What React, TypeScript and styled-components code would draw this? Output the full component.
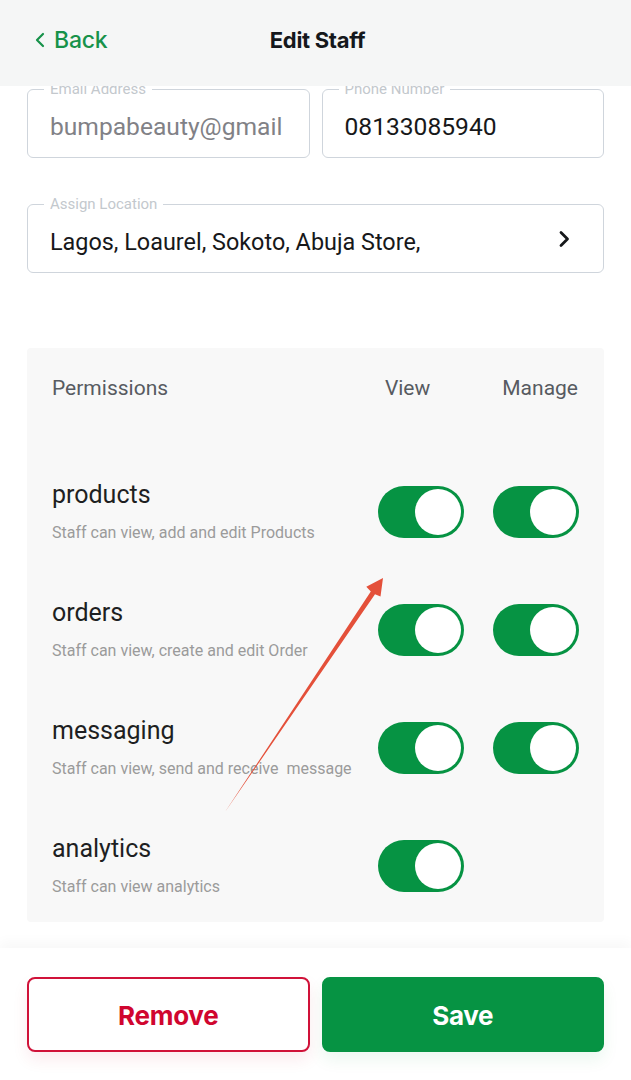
import React from "react";
import styled, { createGlobalStyle } from "styled-components";

const GlobalStyle = createGlobalStyle`
  html, body { margin: 0; padding: 0; background: #ffffff; }
  body { font-family: Roboto, "Noto Sans", Arial, sans-serif; }
  * { box-sizing: border-box; }
`;

const Page = styled.div`
  position: relative;
  width: 631px;
  height: 1080px;
  display: flex;
  flex-direction: column;
  background: #ffffff;
  overflow: hidden;
`;

const Header = styled.header`
  height: 86px;
  flex: 0 0 86px;
  background: #f5f6f6;
  display: grid;
  grid-template-columns: 1fr auto 1fr;
  align-items: center;
  padding: 0 30px 6px 34px;
  position: relative;
  z-index: 2;
`;

const BackButton = styled.div`
  display: flex;
  align-items: center;
  gap: 8px;
  color: #17924a;
  font-family: Inter, Roboto, sans-serif;
  font-size: 23px;
  font-weight: 500;
  letter-spacing: -0.2px;
`;

const Title = styled.h1`
  margin: 0;
  font-family: Inter, Roboto, sans-serif;
  font-size: 22px;
  font-weight: 700;
  color: #15181c;
  letter-spacing: -0.3px;
`;

const Scroll = styled.main`
  flex: 1;
  overflow: hidden;
  padding: 3px 27px 0;
  display: flex;
  flex-direction: column;
`;

const FieldRow = styled.div`
  display: grid;
  grid-template-columns: minmax(0, 1fr) minmax(0, 1fr);
  gap: 12px;
`;

const Field = styled.div<{ $mt?: number; $pr?: number }>`
  position: relative;
  height: 69px;
  min-width: 0;
  margin-top: ${(p) => p.$mt ?? 0}px;
  border: 1.5px solid #cfd5dc;
  border-radius: 6px;
  display: flex;
  align-items: center;
  justify-content: space-between;
  gap: 12px;
  padding: 6px ${(p) => p.$pr ?? 32}px 0 22px;
`;

const FieldLabel = styled.span`
  position: absolute;
  top: -11px;
  left: 16px;
  padding: 0 6px;
  background: #ffffff;
  font-size: 15px;
  line-height: 20px;
  color: #c3c8cd;
  white-space: nowrap;
`;

const FieldValue = styled.span<{ $muted?: boolean }>`
  font-size: 24.6px;
  color: ${(p) => (p.$muted ? "#818186" : "#17181a")};
  white-space: nowrap;
  overflow: hidden;
  min-width: 0;
`;

const LocationValue = styled(FieldValue)`
  font-size: 23.4px;
`;

const Chevron = styled.svg`
  flex: 0 0 auto;
  margin-top: -6px;
`;

const Panel = styled.section`
  margin-top: 75px;
  background: #f8f8f8;
  border-radius: 4px;
  padding: 28px 26px 25px 25px;
  display: flex;
  flex-direction: column;
`;

const PanelHead = styled.div`
  display: flex;
  align-items: center;
  font-size: 21px;
  line-height: 24px;
  color: #575b61;
  margin-bottom: 81px;
`;

const HeadCell = styled.span<{ $ml?: number }>`
  margin-left: ${(p) => p.$ml ?? 0}px;
`;

const Grow = styled.span`
  flex: 1;
`;

const PermRow = styled.div`
  display: grid;
  grid-template-columns: minmax(0, 1fr) 86px 86px;
  column-gap: 29px;
  align-items: center;
  margin-right: -1px;
  & + & {
    margin-top: 56px;
  }
`;

const PermText = styled.div`
  display: flex;
  flex-direction: column;
  gap: 14px;
`;

const PermTitle = styled.span`
  font-size: 25px;
  line-height: 28px;
  color: #1e1f22;
`;

const PermDesc = styled.span`
  font-size: 16px;
  line-height: 20px;
  color: #9b9b9b;
  white-space: nowrap;
`;

const Toggle = styled.div<{ $on: boolean }>`
  width: 86px;
  height: 52px;
  border-radius: 26px;
  background: ${(p) => (p.$on ? "#069343" : "#d6d6d6")};
  display: flex;
  align-items: center;
  justify-content: ${(p) => (p.$on ? "flex-end" : "flex-start")};
  padding: 0 3px;
`;

const Knob = styled.span`
  width: 46px;
  height: 46px;
  border-radius: 50%;
  background: #ffffff;
`;

const Footer = styled.footer`
  flex: 0 0 132px;
  background: #ffffff;
  box-shadow: 0 -6px 12px rgba(0, 0, 0, 0.03);
  padding: 29px 27px 0;
  display: grid;
  grid-template-columns: 1fr 1fr;
  gap: 12px;
  align-items: start;
  position: relative;
  z-index: 1;
`;

const ActionButton = styled.button<{ $variant: "danger" | "primary" }>`
  height: 75px;
  border-radius: 8px;
  padding-top: 3px;
  font-family: Inter, Roboto, sans-serif;
  font-size: 26px;
  font-weight: 700;
  letter-spacing: -0.3px;
  cursor: pointer;
  border: 2px solid ${(p) => (p.$variant === "danger" ? "#d01239" : "#069343")};
  background: ${(p) => (p.$variant === "danger" ? "#ffffff" : "#069343")};
  color: ${(p) => (p.$variant === "danger" ? "#d0062f" : "#ffffff")};
  box-shadow: 0 8px 16px
    ${(p) => (p.$variant === "danger" ? "rgba(208, 18, 57, 0.08)" : "rgba(6, 147, 67, 0.08)")};
`;

const Annotation = styled.svg`
  position: absolute;
  top: 0;
  left: 0;
  width: 631px;
  height: 1080px;
  pointer-events: none;
  z-index: 3;
`;

type Perm = { title: string; desc: string; view: boolean; manage: boolean | null };

const perms: Perm[] = [
  { title: "products", desc: "Staff can view, add and edit Products", view: true, manage: true },
  { title: "orders", desc: "Staff can view, create and edit Order", view: true, manage: true },
  { title: "messaging", desc: "Staff can view, send and receive\u00a0 message", view: true, manage: true },
  { title: "analytics", desc: "Staff can view analytics", view: true, manage: null },
];

export default function App() {
  return (
    <>
      <GlobalStyle />
      <Page>
        <Header>
          <BackButton>
            <svg width="12" height="16" viewBox="0 0 12 16" fill="none">
              <polyline points="9,2 3,8 9,14" stroke="#17924a" strokeWidth="2.2" strokeLinecap="round" strokeLinejoin="round" />
            </svg>
            Back
          </BackButton>
          <Title>Edit Staff</Title>
          <span />
        </Header>
        <Scroll>
          <FieldRow>
            <Field $pr={16}>
              <FieldLabel>Email Address</FieldLabel>
              <FieldValue $muted>bumpabeauty@gmail</FieldValue>
            </Field>
            <Field $pr={16}>
              <FieldLabel>Phone Number</FieldLabel>
              <FieldValue>08133085940</FieldValue>
            </Field>
          </FieldRow>
          <Field $mt={46}>
            <FieldLabel>Assign Location</FieldLabel>
            <LocationValue>Lagos, Loaurel, Sokoto, Abuja Store,</LocationValue>
            <Chevron width="14" height="18" viewBox="0 0 14 18" fill="none">
              <polyline points="4,2.5 10.5,9 4,15.5" stroke="#16181b" strokeWidth="2.8" strokeLinecap="round" strokeLinejoin="round" />
            </Chevron>
          </Field>
          <Panel>
            <PanelHead>
              <Grow>Permissions</Grow>
              <HeadCell>View</HeadCell>
              <HeadCell $ml={72}>Manage</HeadCell>
            </PanelHead>
            {perms.map((p) => (
              <PermRow key={p.title}>
                <PermText>
                  <PermTitle>{p.title}</PermTitle>
                  <PermDesc>{p.desc}</PermDesc>
                </PermText>
                <Toggle $on={p.view}>
                  <Knob />
                </Toggle>
                {p.manage === null ? (
                  <span />
                ) : (
                  <Toggle $on={p.manage}>
                    <Knob />
                  </Toggle>
                )}
              </PermRow>
            ))}
          </Panel>
        </Scroll>
        <Footer>
          <ActionButton $variant="danger">Remove</ActionButton>
          <ActionButton $variant="primary">Save</ActionButton>
        </Footer>
        <Annotation viewBox="0 0 631 1080">
          <polygon
            points="225,812 370.8,591.5 366.3,586.8 383,578 380.5,596.6 375,594.3"
            fill="#e4503a"
          />
        </Annotation>
      </Page>
    </>
  );
}
